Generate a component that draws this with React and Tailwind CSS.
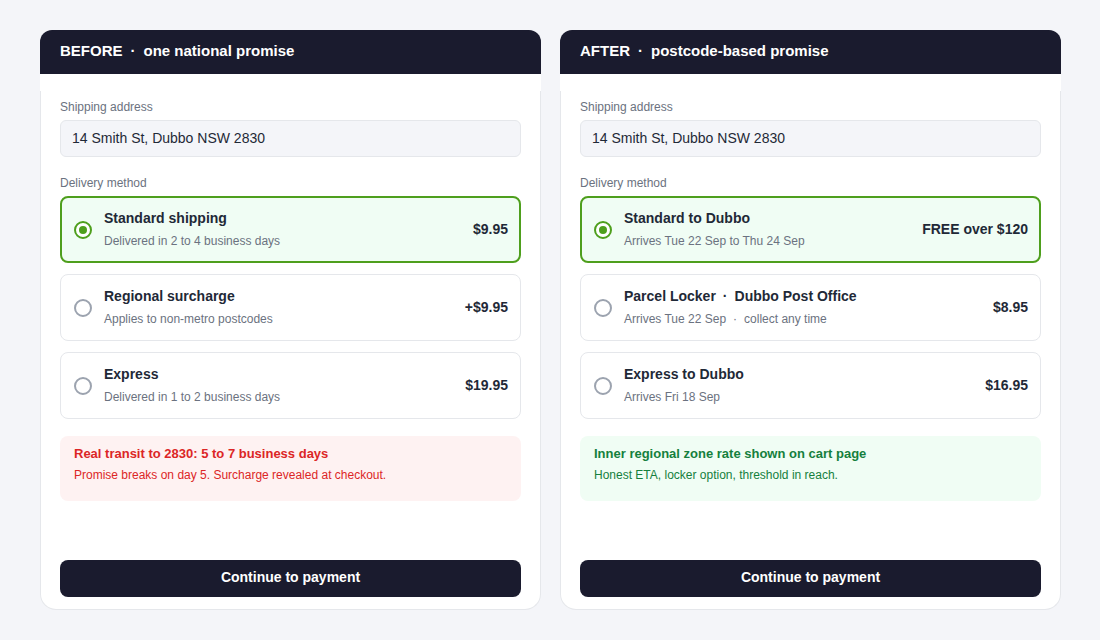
const panels = [
    {
        tag: "BEFORE",
        title: "one national promise",
        options: [
            { name: ["Standard shipping"], sub: ["Delivered in 2 to 4 business days"], price: "$9.95", selected: true },
            { name: ["Regional surcharge"], sub: ["Applies to non-metro postcodes"], price: "+$9.95" },
            { name: ["Express"], sub: ["Delivered in 1 to 2 business days"], price: "$19.95" }
        ],
        note: {
            tone: "bad",
            title: "Real transit to 2830: 5 to 7 business days",
            body: "Promise breaks on day 5. Surcharge revealed at checkout."
        }
    },
    {
        tag: "AFTER",
        title: "postcode-based promise",
        options: [
            { name: ["Standard to Dubbo"], sub: ["Arrives Tue 22 Sep to Thu 24 Sep"], price: "FREE over $120", selected: true },
            { name: ["Parcel Locker", "Dubbo Post Office"], sub: ["Arrives Tue 22 Sep", "collect any time"], price: "$8.95" },
            { name: ["Express to Dubbo"], sub: ["Arrives Fri 18 Sep"], price: "$16.95" }
        ],
        note: {
            tone: "good",
            title: "Inner regional zone rate shown on cart page",
            body: "Honest ETA, locker option, threshold in reach."
        }
    }
];

function Dotted({ parts }) {
    return parts.map((p, i) => (
        <span key={i}>
            {i > 0 && <span className="mx-[7px]">·</span>}
            {p}
        </span>
    ));
}

function Radio({ on }) {
    return on ? (
        <span className="w-[18px] h-[18px] rounded-full border-2 border-[#4e9f1d] flex items-center justify-center bg-white">
            <span className="w-[8px] h-[8px] rounded-full bg-[#4e9f1d]" />
        </span>
    ) : (
        <span className="w-[18px] h-[18px] rounded-full border-2 border-[#9ca3af] bg-white" />
    );
}

function Option({ opt }) {
    return (
        <div
            className={`h-[67px] rounded-lg flex items-center ${opt.selected
                ? "border-2 border-[#4e9f1d] bg-[#f0fdf4] pl-3 pr-[11px]"
                : "border border-[#e5e7eb] bg-white pl-[13px] pr-3"
                }`}
        >
            <Radio on={opt.selected} />
            <div className="flex-1 ml-3 -mt-[2px]">
                <div className="text-[14px] leading-5 font-bold text-[#1f2937]">
                    <Dotted parts={opt.name} />
                </div>
                <div className="mt-[5px] text-[12px] leading-4 text-[#6b7280]">
                    <Dotted parts={opt.sub} />
                </div>
            </div>
            <div className="text-[14px] font-bold text-[#1f2937] -mt-[1px]">{opt.price}</div>
        </div>
    );
}

function Panel({ panel }) {
    const bad = panel.note.tone === "bad";
    return (
        <div className="flex flex-col">
            {/* header */}
            <div className="relative z-10 h-[44px] rounded-t-[12px] bg-[#1a1b2e] px-5 pb-[2px] flex items-center shadow-[0_17px_0_white]">
                <span className="text-[15px] font-bold text-white">
                    {panel.tag}
                    <span className="mx-[8px]">·</span>
                    {panel.title}
                </span>
            </div>

            {/* body */}
            <div className="border border-[#e5e7eb] border-t-0 rounded-b-[16px] bg-white px-[19px] pb-[12px] flex flex-col">
                <div className="mt-[25px] text-[12px] leading-4 text-[#6b7280]">Shipping address</div>
                <div className="mt-[5px] h-[37px] rounded-md border border-[#e5e7eb] bg-[#f4f5f9] pl-[11px] pr-3 flex items-center text-[14px] text-[#1f2937]">
                    14 Smith St, Dubbo NSW 2830
                </div>

                <div className="mt-[18px] text-[12px] leading-4 text-[#6b7280]">Delivery method</div>
                <div className="mt-[5px] flex flex-col gap-[11px]">
                    {panel.options.map((opt, i) => (
                        <Option key={i} opt={opt} />
                    ))}
                </div>

                <div className={`mt-[17px] h-[65px] rounded-lg px-[14px] pt-[10px] ${bad ? "bg-[#fef2f2]" : "bg-[#f0fdf4]"}`}>
                    <div className={`text-[13px] leading-4 font-bold ${bad ? "text-[#dc2626]" : "text-[#15803d]"}`}>
                        {panel.note.title}
                    </div>
                    <div className={`mt-[5px] text-[12px] leading-4 ${bad ? "text-[#dc2626]" : "text-[#15803d]"}`}>
                        {panel.note.body}
                    </div>
                </div>

                <button className="mt-[59px] h-[37px] rounded-lg bg-[#1a1b2e] text-white text-[14px] font-bold pb-[2px]">
                    Continue to payment
                </button>
            </div>
        </div>
    );
}

export default function App() {
    return (
        <div className="w-[1100px] h-[640px] bg-[#f4f5f9] pl-10 pr-[39px] pt-[30px] font-['Liberation_Sans',Arial,sans-serif]">
            <div className="grid grid-cols-2 gap-[19px]">
                {panels.map((p, i) => (
                    <Panel key={i} panel={p} />
                ))}
            </div>
        </div>
    );
}
